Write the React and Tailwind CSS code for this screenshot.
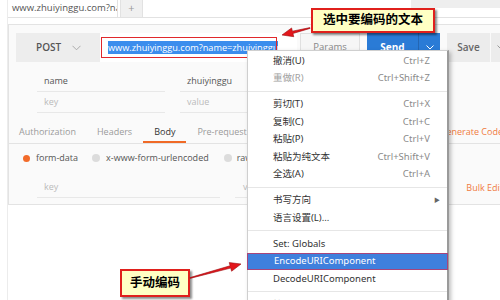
import React from "react";

const cjk = { fontFamily: '"Noto Sans", "Noto Sans CJK SC", sans-serif' };

function Arrow({ x1, y1, x2, y2 }) {
  // tail (x1,y1) -> tip (x2,y2)
  const dx = x2 - x1;
  const dy = y2 - y1;
  const len = Math.hypot(dx, dy);
  const ux = dx / len;
  const uy = dy / len;
  const nx = -uy;
  const ny = ux;
  const head = 11;
  const hw = 4.5;
  const sw = 1.2;
  const bx = x2 - ux * head;
  const by = y2 - uy * head;
  const pts = [
    [x1 + nx * 0.4, y1 + ny * 0.4],
    [bx + nx * sw, by + ny * sw],
    [bx + nx * hw, by + ny * hw],
    [x2, y2],
    [bx - nx * hw, by - ny * hw],
    [bx - nx * sw, by - ny * sw],
    [x1 - nx * 0.4, y1 - ny * 0.4],
  ]
    .map((p) => p.join(","))
    .join(" ");
  return (
    <polygon points={pts} fill="#e3161b" stroke="#9b0d10" strokeWidth="0.6" />
  );
}

function MenuItem({ label, shortcut, muted, sub }) {
  return (
    <div className="h-[17.5px] flex items-center pl-[25px] pr-[17px] text-[9.5px]">
      <span className={muted ? "text-[#a0a0a0]" : "text-[#333]"}>{label}</span>
      <span className="ml-auto text-[#8a8a8a]">{shortcut}</span>
      {sub && <span className="ml-auto -mr-[10px] text-[6px] text-[#666]">▶</span>}
    </div>
  );
}

function Sep() {
  return (
    <div className="h-[8.5px] flex items-center">
      <div className="w-full border-t border-[#e6e6e6]" />
    </div>
  );
}

export default function App() {
  return (
    <div
      className="relative w-[500px] h-[300px] overflow-hidden bg-white flex"
      style={{ fontFamily: '"Open Sans", "Noto Sans CJK SC", sans-serif' }}
    >
      <div className="w-[8px] shrink-0 border-r border-[#ececec]" />

      <div className="flex-1 flex flex-col">
        {/* tab strip */}
        <div className="h-[18px] flex border-b border-[#e2e2e2] relative">
          <div className="w-[110px] bg-white border-r border-[#e2e2e2] pl-[4px] flex items-center text-[9.5px] text-[#555] whitespace-nowrap overflow-hidden">
            www.zhuiyinggu.com?na
          </div>
          <div className="ml-[2px] w-[23px] bg-[#f0f0f0] border-x border-[#e2e2e2] flex items-center justify-center text-[11px] text-[#999]">
            +
          </div>
          <div className="ml-auto mr-[8px] w-[109px] h-[8px] bg-[#eeeeee]" />
        </div>

        {/* request panel */}
        <div className="mt-[6px] h-[181px] w-[520px] border border-[#e3e3e3] bg-[#fafafa] flex flex-col">
          <div className="mt-[8px] h-[29px] flex pl-[7px]">
            <div className="w-[84px] bg-[#ededed] flex items-center pl-[20px] text-[10px] font-semibold text-[#555]">
              POST
              <svg className="ml-[11px]" width="9" height="6" viewBox="0 0 9 6">
                <path d="M0.5 0.8 L4.5 4.8 L8.5 0.8" fill="none" stroke="#aaa" strokeWidth="1" />
              </svg>
            </div>
            <div className="w-[197px] bg-white flex items-center pl-[8px] text-[9.2px] whitespace-nowrap overflow-hidden">
              <span className="bg-[#3b8ded] text-white leading-[13px]">www.zhuiyinggu.com?name=zhuiyinggu</span>
            </div>
            <div className="ml-[3px] w-[60px] bg-[#f6f6f6] border border-[#e0e0e0] flex items-center justify-center text-[9.5px] text-[#888]">
              Params
            </div>
            <div className="ml-[7px] w-[73px] bg-[#2a7bd6] flex text-white">
              <div className="w-[51px] flex items-center justify-center text-[10px] font-bold">Send</div>
              <div className="flex-1 border-l border-[#2466b3] flex items-center justify-center">
                <svg width="8" height="5" viewBox="0 0 8 5">
                  <path d="M0.5 0.5 L4 4 L7.5 0.5" fill="none" stroke="#fff" strokeWidth="1" />
                </svg>
              </div>
            </div>
            <div className="ml-[7px] w-[43px] bg-[#ececec] flex items-center justify-center text-[10px] font-semibold text-[#666]">
              Save
            </div>
            <div className="ml-[1px] w-[20px] bg-[#ececec] flex items-center justify-center">
              <svg width="8" height="5" viewBox="0 0 8 5">
                <path d="M0.5 0.5 L4 4 L7.5 0.5" fill="none" stroke="#999" strokeWidth="1" />
              </svg>
            </div>
          </div>

          <div className="mt-[9px] flex flex-col pl-[28px] text-[9px]">
            <div className="h-[21px] flex">
              <div className="w-[128px] pl-[7px] flex items-center border-b border-[#e8e8e8] text-[#555]">name</div>
              <div className="ml-[15px] w-[128px] pl-[7px] flex items-center border-b border-[#e8e8e8] text-[#555]">zhuiyinggu</div>
            </div>
            <div className="h-[21px] flex">
              <div className="w-[128px] pl-[7px] flex items-center border-b border-[#e8e8e8] text-[#bbb]">key</div>
              <div className="ml-[15px] w-[128px] pl-[7px] flex items-center border-b border-[#e8e8e8] text-[#bbb]">value</div>
            </div>
          </div>

          <div className="h-[31px] flex items-end border-b border-[#e3e3e3] text-[9px]">
            <div className="h-[20px] px-[10px] flex items-center border-b-2 border-transparent text-[#9a9a9a]">Authorization</div>
            <div className="h-[20px] px-[11px] flex items-center border-b-2 border-transparent text-[#9a9a9a]">Headers</div>
            <div className="h-[20px] px-[11px] flex items-center border-b-2 border-[#f06a26] text-[#333]">Body</div>
            <div className="h-[20px] px-[11px] flex items-center border-b-2 border-transparent text-[#9a9a9a]">Pre-request Script</div>
            <div className="h-[20px] ml-auto mr-[24px] flex items-center border-b-2 border-transparent text-[#f07a40]">Generate Code</div>
          </div>

          <div className="h-[28px] flex items-center pl-[14px] text-[9px] text-[#555]">
            <div className="w-[7px] h-[7px] rounded-full bg-[#f26b2a]" />
            <span className="ml-[6px]">form-data</span>
            <div className="ml-[14px] w-[8px] h-[8px] rounded-full bg-[#dcdcdc]" />
            <span className="ml-[6px]">x-www-form-urlencoded</span>
            <div className="ml-[15px] w-[8px] h-[8px] rounded-full bg-[#dcdcdc]" />
            <span className="ml-[5px]">raw</span>
          </div>

          <div className="mt-[5px] h-[21px] flex pl-[28px] text-[9px] text-[#bbb]">
            <div className="w-[183px] pl-[7px] flex items-center border-b border-[#e8e8e8]">key</div>
            <div className="ml-[15px] w-[140px] pl-[8px] flex items-center border-b border-[#e8e8e8]">value</div>
            <div className="ml-auto mr-[24px] flex items-center text-[#f07a40]">Bulk Edit</div>
          </div>
        </div>
      </div>

      {/* red selection marker */}
      <div className="absolute left-[101px] top-[37px] w-[176px] h-[21px] border-[1.5px] border-[#e0282c]" />

      {/* context menu */}
      <div
        className="absolute left-[247px] top-[50px] w-[202px] h-[260px] bg-white border border-[#cfcfcf] border-r-2 border-r-[#9a9a9a] pt-[1px] shadow-[2px_2px_4px_rgba(0,0,0,0.25)]"
        style={cjk}
      >
        <MenuItem label="撤消(U)" shortcut="Ctrl+Z" />
        <MenuItem label="重做(R)" shortcut="Ctrl+Shift+Z" muted />
        <Sep />
        <MenuItem label="剪切(T)" shortcut="Ctrl+X" />
        <MenuItem label="复制(C)" shortcut="Ctrl+C" />
        <MenuItem label="粘贴(P)" shortcut="Ctrl+V" />
        <MenuItem label="粘贴为纯文本" shortcut="Ctrl+Shift+V" />
        <MenuItem label="全选(A)" shortcut="Ctrl+A" />
        <Sep />
        <MenuItem label="书写方向" sub />
        <MenuItem label="语言设置(L)..." />
        <Sep />
        <MenuItem label="Set: Globals" />
        <div className="h-[17.5px] -mx-[1px] flex items-center pl-[26px] bg-[#3f80dd] border border-[#a8457a] text-[9.5px] text-white">
          EncodeURIComponent
        </div>
        <MenuItem label="DecodeURIComponent" />
        <Sep />
        <MenuItem label="检查(N)" />
      </div>

      {/* callouts */}
      <div
        className="absolute left-[311px] top-[8px] w-[124px] h-[25px] bg-[#ffffc4] border-2 border-[#e0201c] shadow-[2px_2px_2px_rgba(0,0,0,0.45)] flex items-center justify-center text-[12.5px] font-bold text-black"
        style={cjk}
      >
        选中要编码的文本
      </div>
      <div
        className="absolute left-[120px] top-[269px] w-[70px] h-[28px] bg-[#ffffc4] border-2 border-[#e0201c] shadow-[2px_2px_2px_rgba(0,0,0,0.45)] flex items-center justify-center text-[12.5px] font-bold text-black"
        style={cjk}
      >
        手动编码
      </div>

      <svg className="absolute left-0 top-0 pointer-events-none" width="500" height="300" viewBox="0 0 500 300">
        <Arrow x1={310} y1={28} x2={282} y2={35} />
        <Arrow x1={190} y1={278} x2={241} y2={264} />
      </svg>
    </div>
  );
}
